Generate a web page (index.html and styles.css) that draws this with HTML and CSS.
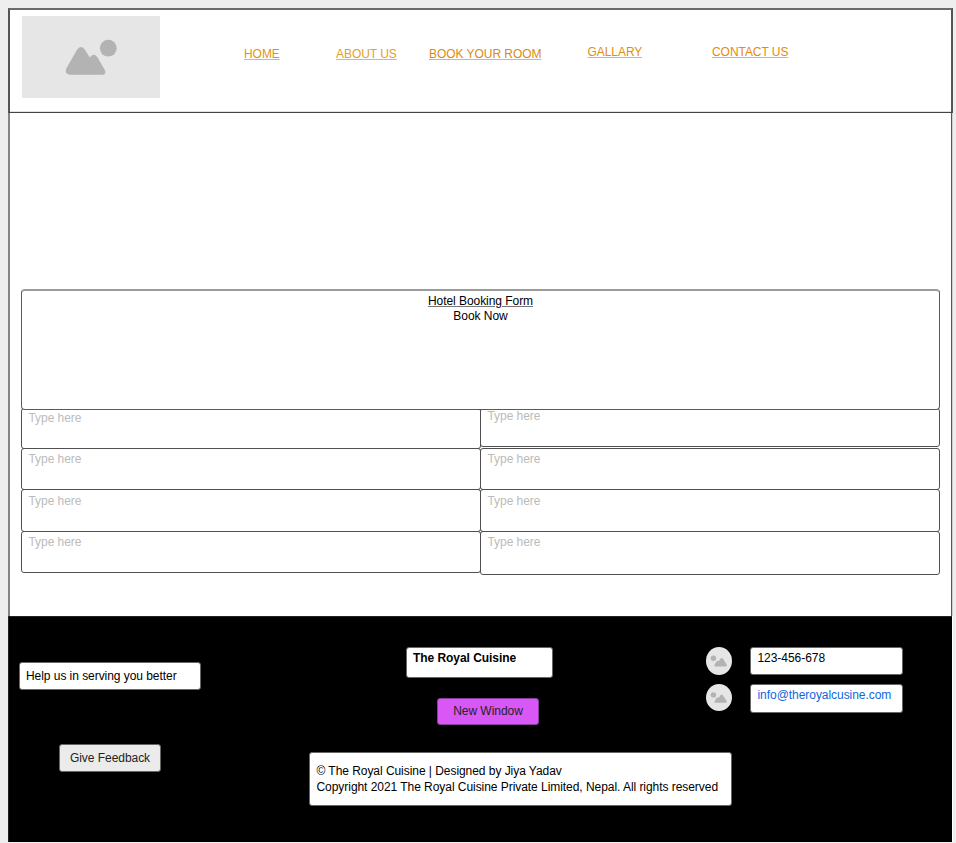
FILE: index.html
```html
<!DOCTYPE html>
<html lang="en">
<head>
<meta charset="utf-8">
<title>The Royal Cuisine</title>
<link rel="stylesheet" href="styles.css">
</head>
<body>
<div class="page">
  <header class="header">
    <svg class="logo" viewBox="0 0 138 82" aria-hidden="true">
      <rect width="138" height="82" fill="#e6e6e6"/>
      <circle cx="86.3" cy="32.2" r="8.4" fill="#b3b3b3"/>
      <path d="M44.3 52.6 L54.6 34.4 Q59 27.6 63.4 34.4 L67.8 41.6 Q71.6 36.2 75.4 41.2 L82.8 54 Q84.6 58.6 80.4 58.8 H47.8 Q42.2 58.2 44.3 52.6Z" fill="#b3b3b3"/>
    </svg>
    <nav class="nav">
      <a class="home" href="#">HOME</a>
      <a class="about" href="#">ABOUT US</a>
      <a class="book" href="#">BOOK YOUR ROOM</a>
      <a class="gallery" href="#">GALLARY</a>
      <a class="contact-link" href="#">CONTACT US</a>
    </nav>
  </header>

  <main class="main">
    <div class="form-title"><u>Hotel Booking Form</u><span>Book Now</span></div>
    <div class="fields">
      <div class="column">
        <div class="field first">Type here</div>
        <div class="field second">Type here</div>
        <div class="field third">Type here</div>
        <div class="field fourth">Type here</div>
      </div>
      <div class="column right">
        <div class="field first">Type here</div>
        <div class="field second">Type here</div>
        <div class="field third">Type here</div>
        <div class="field fourth">Type here</div>
      </div>
    </div>
  </main>

  <footer class="footer">
    <div class="feedback">
      <div class="box help">Help us in serving you better</div>
      <div class="box button">Give Feedback</div>
    </div>
    <div class="info">
      <div class="info-top">
        <div class="brand">
          <div class="box name">The Royal Cuisine</div>
          <div class="box button window">New Window</div>
        </div>
        <div class="contacts">
          <div class="contact">
            <svg class="icon" viewBox="0 0 26 28" preserveAspectRatio="none" aria-hidden="true"><ellipse cx="13" cy="14" rx="13" ry="14" fill="#e6e6e6"/><circle cx="7.4" cy="11.3" r="2.7" fill="#b3b3b3"/><path d="M8.5 17.8 L10.6 14.6 Q11.6 13.2 12.8 14.2 L14.3 11.8 Q15.7 10 17 11.8 L20.7 17.7 Q21.2 19.5 20 19.5 H9.4 Q8 19.3 8.5 17.8Z" fill="#b3b3b3"/></svg>
            <div class="box detail">123-456-678</div>
          </div>
          <div class="contact email">
            <svg class="icon" viewBox="0 0 26 28" preserveAspectRatio="none" aria-hidden="true"><ellipse cx="13" cy="14" rx="13" ry="14" fill="#e6e6e6"/><circle cx="7.4" cy="11.3" r="2.7" fill="#b3b3b3"/><path d="M8.5 17.8 L10.6 14.6 Q11.6 13.2 12.8 14.2 L14.3 11.8 Q15.7 10 17 11.8 L20.7 17.7 Q21.2 19.5 20 19.5 H9.4 Q8 19.3 8.5 17.8Z" fill="#b3b3b3"/></svg>
            <div class="box detail">info@theroyalcusine.com</div>
          </div>
        </div>
      </div>
      <div class="box copyright">© The Royal Cuisine | Designed by Jiya Yadav<br>Copyright 2021 The Royal Cuisine Private Limited, Nepal. All rights reserved</div>
    </div>
  </footer>
</div>
</body>
</html>
```
FILE: styles.css
```css
* { box-sizing: border-box; }

body {
  margin: 0;
  height: 843px;
  padding: 8px 3px 1px 8px;
  overflow: hidden;
  background: #eee;
  font: 12px/15px "Liberation Sans", Arial, sans-serif;
  letter-spacing: -0.05px;
  color: #000;
}

.page { width: 945px; background: #fff; }

.header {
  display: flex;
  height: 105px;
  padding: 6px 0 0 12px;
  border: 2px solid #6b6b6b;
  border-right-color: #555;
  border-left-color: #555;
  border-bottom: 1px solid #444;
  box-shadow: inset 0 -1px #e2e2e2;
}

.logo { width: 138px; height: 82px; flex: none; }

.nav { display: flex; align-items: flex-start; padding: 31px 0 0 84px; white-space: nowrap; }
.nav a { color: #e08e14; text-decoration-color: #eab45f; }
.nav .home { width: 92px; color: #e59312; }
.nav .about { width: 93px; color: #e3a02c; }
.nav .book { width: 158.5px; color: #db8a14; }
.nav .gallery { width: 124.5px; margin-top: -2px; }
.nav .contact-link { margin-top: -2px; color: #e58a0c; }

.main {
  height: 503px;
  padding: 176px 11px 0;
  border-left: 2px solid #858585;
  border-right: 1px solid #cfcfcf;
  box-shadow: inset -1px 0 #555;
}

.form-title {
  position: relative;
  z-index: 1;
  display: flex;
  flex-direction: column;
  align-items: center;
  width: 919px;
  height: 121px;
  padding-top: 3px;
  border: 1px solid #5a5a5a;
  border-top: 2px solid #9b9b9b;
  border-radius: 4px;
  background: #fff;
}
.form-title u { text-decoration-color: #777; }

.fields { display: flex; width: 919px; margin-top: -2px; }
.column { width: 460px; }
.column.right { margin-left: -1px; }
.field {
  padding: 3px 6.5px;
  border: 1px solid #505050;
  border-radius: 3px;
  color: #bbb;
}
.first { height: 41px; padding-top: 2px; }
.second { height: 42px; margin-top: -1px; }
.third { height: 43px; margin-top: -1px; padding-top: 4px; }
.fourth { height: 42px; margin-top: -1px; }
.right .first { height: 39px; padding-top: 0; }
.right .second { margin-top: 1px; }
.right .fourth { height: 44px; }

.footer {
  display: flex;
  width: 944px;
  height: 226px;
  background: #000;
  border-left: 1px solid #222;
  border-top: 1px solid #222;
}

.box {
  padding: 3px 6px;
  border: 1px solid #666;
  border-radius: 3px;
  background: #fff;
  white-space: nowrap;
}

.feedback { width: 300px; padding: 45px 0 0 10px; }
.help { width: 182px; height: 28px; padding-top: 6px; }
.button { width: 102px; height: 28px; padding: 6px 0; text-align: center; color: #222; }
.feedback .button { margin: 54px 0 0 40px; background: #ebebeb; }

.info { padding-top: 29px; }
.info-top { display: flex; height: 106px; }
.brand { width: 397px; padding: 1px 0 0 97px; }
.name { width: 147px; height: 31px; font-weight: bold; }
.brand .window { height: 27px; margin: 20px 0 0 31px; padding-top: 5px; background: #d957f7; border-color: #85419a; }
.contact { display: flex; gap: 18px; height: 38px; }
.icon { width: 26px; height: 28px; margin-top: 1px; }
.contact .detail { width: 153px; height: 28px; margin-top: 1px; padding-left: 6.5px; }
.email .icon { height: 27px; margin-top: 0; }
.email .detail { height: 29px; margin-top: 0; color: #0b67e0; }
.copyright { width: 423px; height: 54px; padding: 10px 6.5px 0; line-height: 16px; }
```
